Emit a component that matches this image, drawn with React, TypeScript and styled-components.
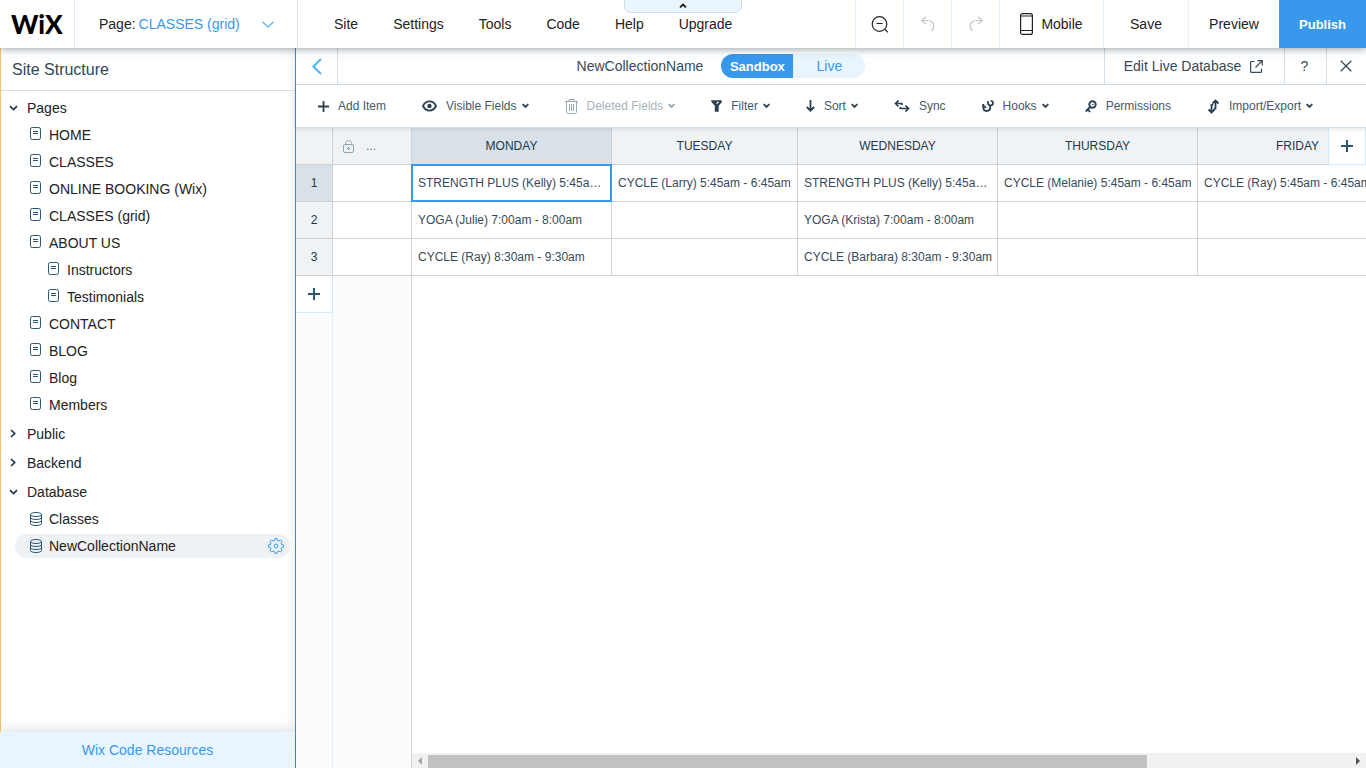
import React from "react";
import styled, { createGlobalStyle, css } from "styled-components";

const blue = "#3899ec";
const ink = "#21384a";
const soft = "#d3dfe9";
const rule = "#cfd1d3";

const GlobalStyle = createGlobalStyle`
  *, *::before, *::after { box-sizing: border-box; }
  body { margin: 0; background: #fff; }
  body, button, input { font-family: "Liberation Sans", Arial, Helvetica, sans-serif; font-size: 14px; }
  button { margin: 0; padding: 0; border: 0; background: none; color: inherit; cursor: pointer; white-space: nowrap; }
  a { color: inherit; text-decoration: none; }
  ul { list-style: none; margin: 0; padding: 0; }
  svg { display: block; flex: none; }
`;

/* ---------- icons ---------- */

type IconProps = { w: number; h: number; children: React.ReactNode; sw?: number };
const Icon = ({ w, h, children, sw = 1 }: IconProps) => (
  <svg width={w} height={h} viewBox={`0 0 ${w} ${h}`} fill="none" stroke="currentColor" strokeWidth={sw} aria-hidden="true">
    {children}
  </svg>
);

const PageIcon = () => (
  <Icon w={11} h={13}>
    <rect x=".5" y=".5" width="10" height="12" rx="1.8" />
    <path d="M3 4.5h5M3 6.5h5" />
  </Icon>
);
const DataIcon = () => (
  <Icon w={12} h={14}>
    <ellipse cx="6" cy="2.5" rx="5.500" ry="2" />
    <path d="M.5 2.500v9c0 1.200 2.400 2 5.500 2s5.500-.8 5.500-2v-9M.5 5.500c0 1.200 2.400 2 5.500 2s5.500-.8 5.500-2M.5 8.500c0 1.200 2.400 2 5.500 2s5.500-.8 5.500-2" />
  </Icon>
);
const Caret = () => (
  <Icon w={7} h={6} sw={1.8}>
    <path d="M.7 1.200l2.800 2.800 2.800-2.800" />
  </Icon>
);
const TreeArrow = ({ open }: { open: boolean }) => (
  <Icon w={9} h={9} sw={1.7}>
    <path d={open ? "M1 3.200l3.500 3.300L8 3.200" : "M2 1l3.700 3.500L2 8"} />
  </Icon>
);
const PlusIcon = ({ size = 11 }: { size?: number }) => (
  <Icon w={size} h={size} sw={size > 11 ? 2 : 1.8}>
    <path d={`M${size / 2} 0v${size}M0 ${size / 2}h${size}`} />
  </Icon>
);
const GearIcon = () => (
  <Icon w={16} h={16}>
    <path d="M6.6 2.4 7 .6h2l.4 1.8 1.5.6 1.6-1 1.5 1.5-1 1.6.6 1.5 1.8.4v2l-1.8.4-.6 1.5 1 1.6-1.5 1.5-1.6-1-1.5.6L9 15.4H7l-.4-1.8-1.5-.6-1.6 1L2 12.500l1-1.600-.6-1.500L.6 9V7l1.800-.4L3 5.100 2 3.500 3.500 2l1.600 1z" strokeLinejoin="round" />
    <circle cx="8" cy="8" r="1.900" />
  </Icon>
);
const EyeIcon = () => (
  <Icon w={15} h={12} sw={1.8}>
    <path d="M1 6c1.400-2.900 3.700-4.600 6.500-4.600S12.600 3.100 14 6c-1.400 2.900-3.700 4.600-6.500 4.600S2.400 8.900 1 6z" />
    <circle cx="7.500" cy="6" r="1.300" fill="currentColor" />
  </Icon>
);
const TrashIcon = () => (
  <Icon w={13} h={15}>
    <path d="M0 2.500h13M4 2.500v-2h5v2M1.500 2.500v10c0 1.200.7 2 1.900 2h6.200c1.200 0 1.900-.8 1.900-2v-10M4.500 5v7M6.500 5v7M8.500 5v7" />
  </Icon>
);
const FilterIcon = () => (
  <Icon w={11} h={12} sw={1.4}>
    <path d="M1 1h9v1L7 5.500V11H4.500V5.500L1.500 2z" fill="currentColor" />
    <path d="M5.500 3.500 7.500 2" stroke="#fff" />
  </Icon>
);
const SortIcon = () => (
  <Icon w={9} h={12} sw={1.8}>
    <path d="M4.500 0v10.500M.8 7l3.700 3.700L8.200 7" />
  </Icon>
);
const SyncIcon = () => (
  <Icon w={16} h={12} sw={1.7}>
    <path d="M8.500 3.500H1.500M4.500.5l-3 3 3 3M5.500 8.500h9M11.500 5.500l3 3-3 3M8 3.500v1.500M6.300 7v1.500" />
  </Icon>
);
const HookIcon = () => (
  <Icon w={12} h={12} sw={1.8}>
    <path d="M1.200 4v3c0 2.300 1.400 4 3.500 4s3.500-1.500 3.500-3.500V5.500M.6 5l3.400 2.800" />
    <path d="M6 1.200C5.600 3.800 6.500 5.400 8.300 5.400c1.600 0 2.700-1 2.700-2.400S10 .9 8.700.9" />
  </Icon>
);
const KeyIcon = () => (
  <Icon w={12} h={13} sw={1.9}>
    <circle cx="7.500" cy="4.500" r="3.200" />
    <path d="M5.300 6.700.8 11.500M2.500 9l2.500 3" />
    <path d="M7 4.500h1.500" strokeWidth="1.200" />
  </Icon>
);
const TransferIcon = () => (
  <Icon w={13} h={15} sw={1.8}>
    <path d="M8.500 10.500V1.500M5.500 4.500l3-3 3 3M4.500 5v8.500M1.500 10.500l3 3 3-3M8.500 9.700H6.800M4.500 5.800h1.700" />
  </Icon>
);
const LockIcon = () => (
  <Icon w={11} h={13}>
    <rect x=".5" y="4.500" width="10" height="8" rx="1.500" />
    <path d="M2.500 4.500V3.500C2.500 1.700 3.700.6 5.500.6s3 1.100 3 2.900v1M5.500 7v3M4 8.500h3" />
  </Icon>
);
const ZoomOutIcon = () => (
  <Icon w={18} h={17} sw={1.2}>
    <circle cx="8.500" cy="8" r="7.300" />
    <path d="M5.500 7.500h6M13.700 13.200l3.300 3.200" />
  </Icon>
);
const UndoIcon = () => (
  <Icon w={14} h={16} sw={1.200}>
    <path d="M5 .7.8 4.500 5 8.300M1 4.500h5.500c3.500 0 6.300 2.300 6.300 5.500 0 2-1 3.800-2.300 5" />
  </Icon>
);
const RedoIcon = () => (
  <Icon w={14} h={16} sw={1.200}>
    <path d="M9 .7l4.200 3.800L9 8.300M13 4.500H7.500C4 4.500 1.200 6.800 1.200 10c0 2 1 3.800 2.300 5" />
  </Icon>
);
const PhoneIcon = () => (
  <Icon w={13} h={22} sw={1.2}>
    <rect x=".6" y=".6" width="11.800" height="20.800" rx="2" />
    <path d="M.5 3h12M.5 17.500h12" />
  </Icon>
);
const ExternalIcon = () => (
  <Icon w={13} h={13} sw={1.200}>
    <path d="M4.500 1.500H1.600c-.6 0-1 .4-1 1v8.900c0 .6.4 1 1 1h8.900c.6 0 1-.4 1-1V8.500M7.500.7h4.800v4.800M12 1 5.500 7.500" />
  </Icon>
);
const CloseIcon = () => (
  <Icon w={12} h={12} sw={1.300}>
    <path d="M.7.7l10.600 10.600M11.300.7.7 11.300" />
  </Icon>
);

/* ---------- top bar ---------- */

const Shell = styled.div`
  display: flex;
  flex-direction: column;
  min-height: 100vh;
  overflow: hidden;
`;

const TopBar = styled.header`
  position: relative;
  z-index: 2;
  display: flex;
  height: 48px;
  background: #fff;
  box-shadow: 0 1px 8px rgba(22, 45, 61, 0.45);
  color: #222;
`;

const Logo = styled.a`
  display: flex;
  align-items: center;
  width: 75px;
  padding-left: 11px;
  border-right: 1px solid #dfe5f5;
  font: 900 26px/48px Lato, "Liberation Sans", sans-serif;
  color: #000;
`;

const PagePicker = styled.button`
  display: flex;
  align-items: center;
  width: 223px;
  padding: 0 23px 0 24px;
  border-right: 1px solid #dfe5f5;
  gap: 3px;
  svg { margin-left: auto; color: #6db7f5; }
`;

const PageName = styled.span`
  color: ${blue};
`;

const Menu = styled.nav`
  display: flex;
  flex: 1;
  padding-left: 36px;
  gap: 35px;
`;

const Tab = styled.button`
  position: absolute;
  top: -2px;
  left: 50%;
  display: flex;
  justify-content: center;
  align-items: center;
  width: 118px;
  height: 15px;
  transform: translateX(-50%);
  border: 1px solid #cddbea;
  border-radius: 0 0 7px 7px;
  background: #eaf6ff;
`;

const TopAction = styled.button<{ $width: number; $faded?: boolean }>`
  display: flex;
  align-items: center;
  justify-content: center;
  gap: 8px;
  width: ${(p) => p.$width}px;
  border-left: 1px solid #e8f4fd;
  color: ${(p) => (p.$faded ? "#c4c4c4" : "#222")};
`;

const Publish = styled.button`
  width: 87px;
  background: ${blue};
  color: #fff;
  font-size: 13px;
  font-weight: bold;
`;

/* ---------- site structure ---------- */

const Workspace = styled.div`
  display: flex;
  flex: 1;
`;

const Sidebar = styled.aside`
  display: flex;
  flex-direction: column;
  flex: none;
  width: 296px;
  border-right: 1px solid #3b8ad0;
  box-shadow: inset -12px 0 10px -10px rgba(0, 0, 0, 0.08);
`;

const Structure = styled.div`
  flex: 1;
  border-left: 1px solid #f5c46c;
`;

const SidebarTitle = styled.h2`
  margin: 0;
  height: 43px;
  padding-left: 11px;
  border-bottom: 1px solid ${soft};
  font-size: 16px;
  font-weight: normal;
  line-height: 44px;
  color: #32465a;
`;

const Tree = styled.ul`
  padding: 3px 5px 0 0;
`;

const Group = styled.li`
  margin-bottom: 2px;
`;

const NodeList = styled.ul`
  margin-bottom: 2px;
`;

const Section = styled.button`
  display: flex;
  align-items: center;
  gap: 9px;
  height: 27px;
  padding-left: 8px;
  color: #222;
  svg { color: ${ink}; }
`;

const Node = styled.li<{ $level?: number; $active?: boolean }>`
  display: flex;
  align-items: center;
  justify-content: space-between;
  height: 24px;
  margin: 2px 0 3px 14px;
  padding: 0 6px 0 ${(p) => (p.$level ? 33 : 15)}px;
  border-radius: 12px;
  & + & { margin-top: 0; }
  ${(p) => p.$active && css`background: #eef2f5;`}
`;

const NodeLink = styled.a`
  display: flex;
  align-items: center;
  color: #222;
`;

const NodeIcon = styled.span<{ $raised?: boolean }>`
  width: 19px;
  padding-bottom: ${(p) => (p.$raised ? 3 : 0)}px;
  color: #2b5672;
`;

const GearButton = styled.button`
  color: ${blue};
`;

const Resources = styled.a`
  display: flex;
  align-items: center;
  justify-content: center;
  height: 36px;
  background: #e8f5fe;
  box-shadow: 0 -4px 12px rgba(0, 0, 0, 0.1);
  color: ${blue};
`;

/* ---------- database ---------- */

const Database = styled.main`
  display: flex;
  flex: 1;
  flex-direction: column;
  min-width: 0;
  color: #364a5a;
`;

const DbHead = styled.div`
  display: flex;
  height: 37px;
  border-bottom: 1px solid ${soft};
`;

const Back = styled.button`
  display: flex;
  align-items: center;
  justify-content: center;
  width: 42px;
  border-right: 1px solid ${soft};
  color: #4eb7f5;
`;

const DbTitle = styled.div`
  display: flex;
  flex: 1;
  align-items: center;
  justify-content: center;
  gap: 18px;
`;

const Name = styled.h1`
  margin: 0;
  font-size: 14px;
  font-weight: normal;
`;

const Switcher = styled.div`
  display: flex;
  border-radius: 12px;
  overflow: hidden;
`;

const Mode = styled.button<{ $on?: boolean }>`
  width: 72px;
  height: 24px;
  background: ${(p) => (p.$on ? blue : "#e8f5fe")};
  color: ${(p) => (p.$on ? "#fff" : blue)};
  font-weight: ${(p) => (p.$on ? "bold" : "normal")};
  font-size: ${(p) => (p.$on ? 13 : 14)}px;
`;

const HeadAction = styled.button<{ $width: number }>`
  display: flex;
  align-items: center;
  justify-content: center;
  gap: 9px;
  width: ${(p) => p.$width}px;
  padding-right: 2px;
  border-left: 1px solid ${soft};
`;

const Toolbar = styled.div`
  position: relative;
  z-index: 1;
  display: flex;
  align-items: center;
  gap: 36px;
  height: 43px;
  padding-left: 22px;
  border-bottom: 1px solid ${soft};
  box-shadow: 0 1px 4px rgba(22, 45, 61, 0.14);
`;

const Tool = styled.button<{ $off?: boolean }>`
  display: flex;
  align-items: center;
  gap: 9px;
  font-size: 12px;
  color: ${(p) => (p.$off ? "#a8b3bb" : "#455868")};
  svg { color: ${(p) => (p.$off ? "#93a7b5" : "#2b4152")}; }
`;

const ToolText = styled.span`
  display: flex;
  align-items: center;
  gap: 5px;
`;

const Grid = styled.div`
  position: relative;
  display: flex;
  flex: 1;
  flex-direction: column;
  overflow: hidden;
`;

const Sheet = styled.table`
  width: 1102px;
  table-layout: fixed;
  border-collapse: separate;
  border-spacing: 0;
  font-size: 12px;
`;

const cell = css`
  height: 37px;
  border-right: 1px solid ${rule};
  border-bottom: 1px solid ${rule};
  font-weight: normal;
`;

const HeadCell = styled.th<{ $on?: boolean }>`
  ${cell}
  padding: 0 6px;
  background: ${(p) => (p.$on ? "#d9e1e8" : "#eff3f6")};
  color: ${ink};
`;

const Cell = styled.td<{ $on?: boolean }>`
  ${cell}
  padding: 0 2px 0 6px;
  overflow: hidden;
  text-overflow: ellipsis;
  white-space: nowrap;
  ${(p) => p.$on && css`
    position: relative;
    border-color: ${blue};
    box-shadow: -1px 0 ${blue}, 0 -1px ${blue}, -1px -1px ${blue}, inset 0 0 0 1px ${blue};
  `}
`;

const LockedLabel = styled.div`
  display: flex;
  align-items: center;
  gap: 12px;
  padding-left: 4px;
  color: #5b6f7e;
  svg { color: #8fa3b1; }
`;

const Below = styled.div`
  display: flex;
  flex: 1;
`;

const Gutter = styled.div<{ $width: number; $strong?: boolean }>`
  width: ${(p) => p.$width}px;
  flex: none;
  background: #fbfcfe;
  border-right: 1px solid ${(p) => (p.$strong ? rule : "#e9edf0")};
`;

const addButton = css`
  display: flex;
  align-items: center;
  justify-content: center;
  width: 37px;
  height: 37px;
  border: solid #d0ebfd;
  background: #fff;
  color: #2b5672;
`;

const AddRow = styled.button`
  ${addButton}
  border-width: 0 1px 1px 0;
`;

const AddColumn = styled.button`
  ${addButton}
  position: absolute;
  top: 0;
  right: 0;
  width: 38px;
  border-width: 0 1px 1px;
`;

const Blank = styled.div`
  display: flex;
  flex: 1;
  flex-direction: column;
  justify-content: flex-end;
`;

const ScrollBar = styled.div`
  display: flex;
  height: 15px;
  background: #f1f1f1;
`;

const ScrollButton = styled.button`
  display: flex;
  align-items: center;
  justify-content: center;
  width: 16px;
`;

const ScrollTrack = styled.div`
  flex: 1;
  padding-top: 2px;
`;

const ScrollThumb = styled.div`
  width: 78%;
  height: 13px;
  background: #c1c1c1;
`;

/* ---------- data ---------- */

const pages = [
  { name: "HOME" },
  { name: "CLASSES" },
  { name: "ONLINE BOOKING (Wix)" },
  { name: "CLASSES (grid)" },
  { name: "ABOUT US" },
  { name: "Instructors", level: 1 },
  { name: "Testimonials", level: 1 },
  { name: "CONTACT" },
  { name: "BLOG" },
  { name: "Blog" },
  { name: "Members" },
];

const tools = [
  { label: "Add Item", icon: <PlusIcon /> },
  { label: "Visible Fields", icon: <EyeIcon />, menu: true },
  { label: "Deleted Fields", icon: <TrashIcon />, menu: true, off: true },
  { label: "Filter", icon: <FilterIcon />, menu: true },
  { label: "Sort", icon: <SortIcon />, menu: true },
  { label: "Sync", icon: <SyncIcon /> },
  { label: "Hooks", icon: <HookIcon />, menu: true },
  { label: "Permissions", icon: <KeyIcon /> },
  { label: "Import/Export", icon: <TransferIcon />, menu: true },
];

const days = ["MONDAY", "TUESDAY", "WEDNESDAY", "THURSDAY", "FRIDAY"];

const rows = [
  [
    "STRENGTH PLUS (Kelly) 5:45am - 6:45am",
    "CYCLE (Larry) 5:45am - 6:45am",
    "STRENGTH PLUS (Kelly) 5:45am - 6:45am",
    "CYCLE (Melanie) 5:45am - 6:45am",
    "CYCLE (Ray) 5:45am - 6:45am",
  ],
  ["YOGA (Julie) 7:00am - 8:00am", "", "YOGA (Krista) 7:00am - 8:00am", "", ""],
  ["CYCLE (Ray) 8:30am - 9:30am", "", "CYCLE (Barbara) 8:30am - 9:30am", "", ""],
];

export default function App() {
  return (
    <Shell>
      <GlobalStyle />
      <TopBar>
        <Logo href="#">WiX</Logo>
        <PagePicker>
          Page: <PageName>CLASSES (grid)</PageName>
          <Icon w={12} h={7} sw={1.3}><path d="M.5.7 6 6 11.500.7" /></Icon>
        </PagePicker>
        <Menu>
          {["Site", "Settings", "Tools", "Code", "Help", "Upgrade"].map((m) => (
            <button key={m}>{m}</button>
          ))}
        </Menu>
        <TopAction $width={48} aria-label="Zoom out"><ZoomOutIcon /></TopAction>
        <TopAction $width={48} $faded aria-label="Undo"><UndoIcon /></TopAction>
        <TopAction $width={48} $faded aria-label="Redo"><RedoIcon /></TopAction>
        <TopAction $width={104}><PhoneIcon />Mobile</TopAction>
        <TopAction $width={85}>Save</TopAction>
        <TopAction $width={91}>Preview</TopAction>
        <Publish>Publish</Publish>
        <Tab aria-label="Hide toolbar">
          <Icon w={8} h={5} sw={1.800}><path d="M1 4.500l3-3 3 3" /></Icon>
        </Tab>
      </TopBar>

      <Workspace>
        <Sidebar>
          <Structure>
            <SidebarTitle>Site Structure</SidebarTitle>
            <Tree>
              <Group>
                <Section><TreeArrow open />Pages</Section>
                <NodeList>
                  {pages.map((p) => (
                    <Node key={p.name} $level={p.level}>
                      <NodeLink href="#"><NodeIcon $raised><PageIcon /></NodeIcon>{p.name}</NodeLink>
                    </Node>
                  ))}
                </NodeList>
              </Group>
              <Group><Section><TreeArrow open={false} />Public</Section></Group>
              <Group><Section><TreeArrow open={false} />Backend</Section></Group>
              <Group>
                <Section><TreeArrow open />Database</Section>
                <NodeList>
                  <Node><NodeLink href="#"><NodeIcon><DataIcon /></NodeIcon>Classes</NodeLink></Node>
                  <Node $active>
                    <NodeLink href="#"><NodeIcon><DataIcon /></NodeIcon>NewCollectionName</NodeLink>
                    <GearButton aria-label="Collection settings"><GearIcon /></GearButton>
                  </Node>
                </NodeList>
              </Group>
            </Tree>
          </Structure>
          <Resources href="#">Wix Code Resources</Resources>
        </Sidebar>

        <Database>
          <DbHead>
            <Back aria-label="Back"><Icon w={10} h={17} sw={2}><path d="M9 1 1.500 8.500 9 16" /></Icon></Back>
            <DbTitle>
              <Name>NewCollectionName</Name>
              <Switcher>
                <Mode $on aria-pressed="true">Sandbox</Mode>
                <Mode aria-pressed="false">Live</Mode>
              </Switcher>
            </DbTitle>
            <HeadAction $width={180}>Edit Live Database<ExternalIcon /></HeadAction>
            <HeadAction $width={42}>?</HeadAction>
            <HeadAction $width={40} aria-label="Close"><CloseIcon /></HeadAction>
          </DbHead>

          <Toolbar>
            {tools.map((t) => (
              <Tool key={t.label} $off={t.off} disabled={t.off}>
                {t.icon}
                <ToolText>{t.label}{t.menu && <Caret />}</ToolText>
              </Tool>
            ))}
          </Toolbar>

          <Grid>
            <Sheet>
              <colgroup>
                <col width={37} />
                <col width={79} />
                <col width={200} />
                <col width={186} />
                <col width={200} />
                <col width={200} />
                <col width={200} />
              </colgroup>
              <thead>
                <tr>
                  <HeadCell />
                  <HeadCell><LockedLabel><LockIcon />...</LockedLabel></HeadCell>
                  {days.map((d, i) => <HeadCell key={d} scope="col" $on={i === 0}>{d}</HeadCell>)}
                </tr>
              </thead>
              <tbody>
                {rows.map((r, i) => (
                  <tr key={i}>
                    <HeadCell scope="row" $on={i === 0}>{i + 1}</HeadCell>
                    <Cell />
                    {r.map((text, j) => (
                      <Cell key={j} $on={i === 0 && j === 0}>{text}</Cell>
                    ))}
                  </tr>
                ))}
              </tbody>
            </Sheet>
            <AddColumn aria-label="Add field"><PlusIcon size={12} /></AddColumn>
            <Below>
              <Gutter $width={37}><AddRow aria-label="Add row"><PlusIcon size={12} /></AddRow></Gutter>
              <Gutter $width={79} $strong />
              <Blank>
                <ScrollBar>
                  <ScrollButton aria-label="Scroll left">
                    <svg width="4" height="8" viewBox="0 0 4 8" fill="#a3a3a3"><path d="M4 0v8L0 4z" /></svg>
                  </ScrollButton>
                  <ScrollTrack><ScrollThumb /></ScrollTrack>
                  <ScrollButton aria-label="Scroll right">
                    <svg width="4" height="8" viewBox="0 0 4 8" fill="#505050"><path d="M0 0v8l4-4z" /></svg>
                  </ScrollButton>
                </ScrollBar>
              </Blank>
            </Below>
          </Grid>
        </Database>
      </Workspace>
    </Shell>
  );
}
